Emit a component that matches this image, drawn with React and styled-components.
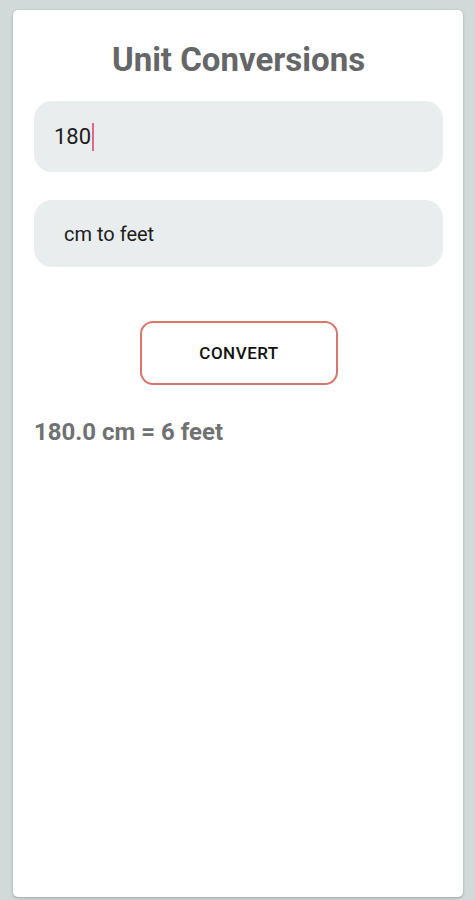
import React from "react";
import styled, { createGlobalStyle } from "styled-components";

const Global = createGlobalStyle`
  html, body { margin: 0; padding: 0; background: #d1dad9; }
  body { font-family: Roboto, "Noto Sans", sans-serif; }
`;

const Screen = styled.div`
  width: 475px;
  height: 900px;
  box-sizing: border-box;
  padding: 10px 12px 3px 13px;
  display: flex;
`;

const Card = styled.div`
  flex: 1;
  background: #ffffff;
  border-radius: 5px;
  box-shadow: 0 1px 3px rgba(0, 0, 0, 0.25);
  padding: 0 20px 0 21px;
  display: flex;
  flex-direction: column;
`;

const Title = styled.h1`
  margin: 30px 0 0;
  text-align: center;
  font-family: Roboto, sans-serif;
  font-weight: 700;
  font-size: 33px;
  line-height: 40px;
  color: #646667;
`;

const Field = styled.div`
  margin-top: ${(p) => p.$top}px;
  height: ${(p) => p.$h}px;
  background: #e9eded;
  border-radius: 18px;
  display: flex;
  align-items: center;
  padding-left: ${(p) => p.$pad}px;
  font-family: Roboto, sans-serif;
  font-size: ${(p) => p.$size}px;
  color: #1d1d1d;
`;

const Caret = styled.span`
  display: inline-block;
  width: 2px;
  height: 28px;
  background: #e2668c;
  margin-left: 1px;
`;

const ButtonRow = styled.div`
  margin-top: 54px;
  display: flex;
  justify-content: center;
`;

const ConvertButton = styled.button`
  width: 198px;
  height: 64px;
  box-sizing: border-box;
  background: #ffffff;
  border: 2px solid #d9766b;
  border-radius: 13px;
  font-family: Roboto, sans-serif;
  font-weight: 500;
  font-size: 17px;
  color: #111;
  letter-spacing: 0.5px;
  margin-left: 1px;
`;

const Result = styled.div`
  margin-top: 33px;
  font-family: Roboto, sans-serif;
  font-weight: 700;
  font-size: 24px;
  line-height: 28px;
  color: #707172;
`;

export default function App() {
  return (
    <>
      <Global />
      <Screen>
        <Card>
          <Title>Unit Conversions</Title>
          <Field $top={21} $h={71} $pad={20} $size={22}>
            180<Caret />
          </Field>
          <Field $top={28} $h={67} $pad={30} $size={20}>
            cm to feet
          </Field>
          <ButtonRow>
            <ConvertButton>CONVERT</ConvertButton>
          </ButtonRow>
          <Result>180.0 cm = 6 feet</Result>
        </Card>
      </Screen>
    </>
  );
}
